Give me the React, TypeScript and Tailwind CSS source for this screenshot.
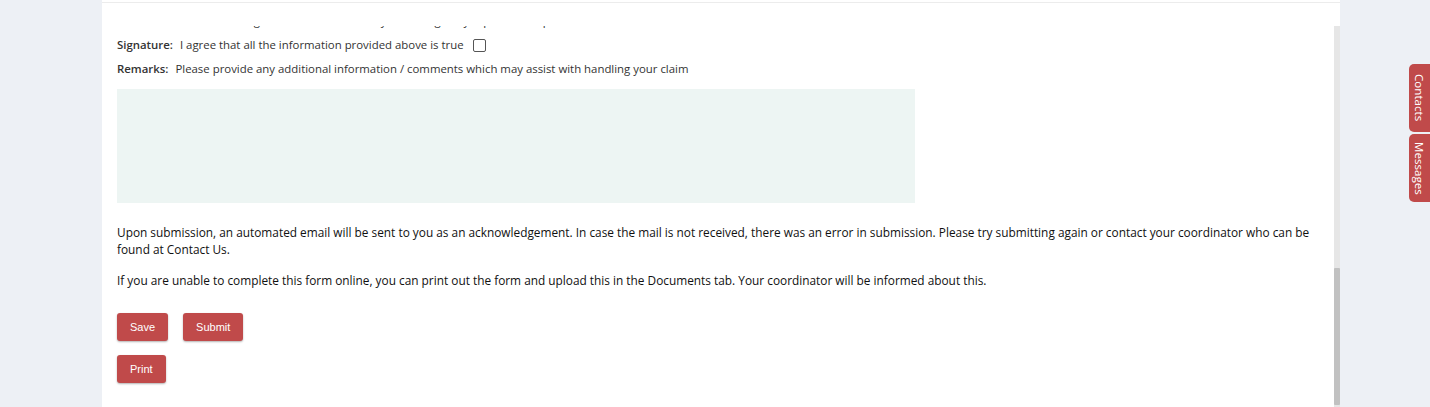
import React from 'react';

const font = { fontFamily: '"Open Sans", "Liberation Sans", sans-serif' };

function RedButton({ label }: { label: string }) {
  return (
    <button className="h-[28px] px-[13px] rounded-[3px] bg-[#c04a4a] text-white text-[11px] font-['Liberation_Sans',Arial,sans-serif] shadow-[0_1px_2px_rgba(0,0,0,0.3)]">
      {label}
    </button>
  );
}

function SideTab({ label }: { label: string }) {
  return (
    <div className="w-[21px] h-[68px] rounded-l-[5px] bg-[#c04a4a] text-white text-[11.6px] flex items-center justify-center">
      <span className="[writing-mode:vertical-rl]">{label}</span>
    </div>
  );
}

export default function App() {
  return (
    <div className="w-[1430px] h-[407px] bg-[#edf0f5] flex overflow-hidden" style={font}>
      <div className="w-[102px] shrink-0" />

      {/* Form panel */}
      <div className="w-[1238px] shrink-0 bg-white flex flex-col">
        <div className="h-[2px]" />
        <div className="h-px bg-[#ececec]" />
        <div className="h-[23px]" />
        <div className="flex-1 flex min-h-0">
          <div className="flex-1 overflow-hidden pl-[15px]">
            <div className="-mt-[17px] text-[11.4px] text-[#333]">
              <div className="h-[24px] flex items-center">
                <span className="font-semibold mr-[7px]">Declaration:</span>
                <span>I acknowledge that, to the best of my knowledge, my report is complete</span>
              </div>
              <div className="h-[24px] flex items-center">
                <span className="font-semibold mr-[7px]">Signature:</span>
                <span>I agree that all the information provided above is true</span>
                <span className="ml-[9px] w-[13px] h-[13px] border border-[#555] rounded-[2px]" />
              </div>
              <div className="h-[24px] flex items-center">
                <span className="font-semibold mr-[7px]">Remarks:</span>
                <span>Please provide any additional information / comments which may assist with handling your claim</span>
              </div>
            </div>

            <div className="mt-[8px] w-[798px] h-[114px] bg-[#edf5f3]" />

            <div className="mt-[21px] pr-[24px] text-[11.85px] leading-[17px] text-[#111]">
              <p>
                Upon submission, an automated email will be sent to you as an acknowledgement. In case the mail is not received, there was an error in submission. Please try submitting again or contact your coordinator who can be found at Contact Us.
              </p>
              <p className="mt-[14px]">
                If you are unable to complete this form online, you can print out the form and upload this in the Documents tab. Your coordinator will be informed about this.
              </p>
            </div>

            <div className="mt-[24px] flex gap-[15px]">
              <RedButton label="Save" />
              <RedButton label="Submit" />
            </div>
            <div className="mt-[14px] flex">
              <RedButton label="Print" />
            </div>
          </div>

          {/* scrollbar */}
          <div className="w-[6px] shrink-0 bg-[#e6e6e6] flex flex-col justify-end pb-[2px]">
            <div className="h-[137px] bg-[#c1c1c1] rounded-[1px]" />
          </div>
        </div>
      </div>

      {/* Side tabs */}
      <div className="flex-1 flex flex-col items-end pt-[64px] gap-[2px]">
        <SideTab label="Contacts" />
        <SideTab label="Messages" />
      </div>
    </div>
  );
}
